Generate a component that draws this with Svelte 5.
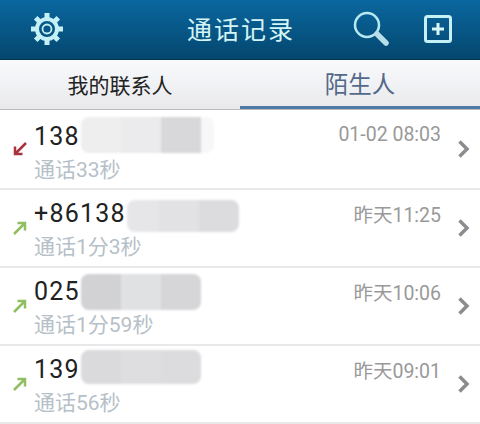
<script>
  const calls = [
    { num: "138", sub: "通话33秒", time: "01-02 08:03", dir: "in", shift: -1, h: 36, blur: [["#eeeeef", 40], ["#ebebed", 40], ["#d8d8da", 40], ["#f7f7f8", 13]] },
    { num: "+86138", sub: "通话1分3秒", time: "昨天11:25", dir: "out", shift: 3, h: 32, blur: [["#e6e6e8", 32], ["#e2e2e4", 40], ["#dcdcde", 40]] },
    { num: "025", sub: "通话1分59秒", time: "昨天10:06", dir: "out", shift: 1, h: 36, blur: [["#d2d2d4", 40], ["#e0e1e2", 40], ["#d6d6d8", 40]] },
    { num: "139", sub: "通话56秒", time: "昨天09:01", dir: "out", shift: -2, h: 34, blur: [["#dadadc", 40], ["#dedee0", 40], ["#dcdcde", 40]] },
  ];
</script>

<div class="screen">
  <header>
    <svg class="gear" width="34" height="34" viewBox="0 0 34 34">
      <g stroke="#c4f0f6" stroke-width="5">
        <path d="M17 1v5M17 28v5M1 17h5M28 17h5M5.700 5.700l3.500 3.500M24.800 24.800l3.500 3.500M5.700 28.300l3.500-3.500M24.800 9.200l3.500-3.500" />
      </g>
      <circle cx="17" cy="17" r="10" fill="none" stroke="#c4f0f6" stroke-width="4" />
      <circle cx="17" cy="17" r="4.500" fill="none" stroke="#c4f0f6" stroke-width="1.800" />
    </svg>
    <h1>通话记录</h1>
    <svg class="search" width="38" height="38" viewBox="0 0 38 38">
      <circle cx="15" cy="15" r="12" fill="none" stroke="#b8e8f0" stroke-width="2.500" />
      <path d="M25 24l9 9" stroke="#b8dfe8" stroke-width="5.500" stroke-linecap="round" />
    </svg>
    <svg class="add" width="28" height="28" viewBox="0 0 28 28">
      <rect x="1.500" y="1.500" width="25" height="25" rx="2" fill="none" stroke="#c4f0f6" stroke-width="3" />
      <path d="M14 8v12M8 14h12" stroke="#d8f6fa" stroke-width="3" />
    </svg>
  </header>

  <nav>
    <div class="tab">我的联系人</div>
    <div class="tab active">陌生人</div>
  </nav>

  <ul>
    {#each calls as call}
      <li>
        <svg class="dir" width="18" height="18" viewBox="0 0 18 18">
          {#if call.dir === "in"}
            <path d="M15 3L5 13M4 6.500V14h7.500" fill="none" stroke="#a8333c" stroke-width="2.500" />
          {:else}
            <path d="M3 15L13 5M6.500 4H14v7.500" fill="none" stroke="#8fbf60" stroke-width="2.500" />
          {/if}
        </svg>
        <div class="info">
          <div class="num">
            {call.num}<span class="blur" style:height="{call.h}px" style:margin-top="{call.shift * 2}px">
              {#each call.blur as [color, width]}
                <i style:background={color} style:width="{width}px"></i>
              {/each}
            </span>
          </div>
          <div class="sub">{call.sub}</div>
        </div>
        <div class="time">{call.time}</div>
        <svg class="chev" width="14" height="20" viewBox="0 0 14 20">
          <path d="M2.500 2.500L10 10l-7.500 7.500" fill="none" stroke="#8c8c90" stroke-width="3.500" />
        </svg>
      </li>
    {/each}
  </ul>
</div>

<style>
  :global(body) {
    margin: 0;
    background: #fff;
  }

  .screen {
    width: 480px;
    height: 424px;
    overflow: hidden;
    font-family: Roboto, "Noto Sans CJK SC", sans-serif;
  }

  header {
    height: 59px;
    display: flex;
    align-items: center;
    background: linear-gradient(#0a679f, #04476f);
    border-bottom: 1px solid #03344f;
  }

  .gear {
    margin: -2px 0 0 30px;
  }

  h1 {
    margin: -3px 0 0 123px;
    width: 107px;
    font-size: 25px;
    font-weight: 400;
    letter-spacing: 2px;
    color: #d4f4f6;
    white-space: nowrap;
  }

  .search {
    margin: -2px 0 0 58px;
  }

  .add {
    margin: -2px 0 0 34px;
  }

  nav {
    height: 49px;
    display: flex;
    background: linear-gradient(#f8fafc, #e9e9ec);
    border-bottom: 1px solid #b9b9bd;
  }

  .tab {
    flex: 1;
    display: flex;
    align-items: center;
    justify-content: center;
    padding-bottom: 2px;
    font-size: 21px;
    color: #222;
  }

  .tab.active {
    font-size: 23.5px;
    color: #53698a;
    box-shadow: inset 0 -3px 0 #4f7ba6;
    padding-bottom: 4px;
  }

  ul {
    list-style: none;
    margin: 0;
    padding: 0;
  }

  li {
    height: 76px;
    display: flex;
    border-bottom: 2px solid #e8e8ea;
    position: relative;
  }

  li:first-child {
    height: 78px;
  }

  .dir {
    align-self: center;
    margin-left: 11px;
    flex: none;
  }

  .info {
    margin-left: 5px;
    padding-top: 5px;
    flex: 1;
  }

  li:first-child .info {
    padding-top: 8px;
  }

  .num {
    display: flex;
    align-items: center;
    height: 36px;
    font-size: 25px;
    letter-spacing: 1.2px;
    color: #222;
  }

  .blur {
    display: flex;
    margin-left: 1px;
    border-radius: 8px;
    overflow: hidden;
    filter: blur(1px);
  }

  .blur i {
    display: block;
  }

  .sub {
    margin-top: 3px;
    font-size: 21px;
    line-height: 26px;
    color: #b6c0c8;
  }

  .time {
    position: absolute;
    right: 39px;
    top: 9px;
    font-size: 19.5px;
    color: #999;
  }

  li:first-child .time {
    top: 13px;
  }

  .chev {
    align-self: center;
    margin-right: 9px;
    flex: none;
  }
</style>
